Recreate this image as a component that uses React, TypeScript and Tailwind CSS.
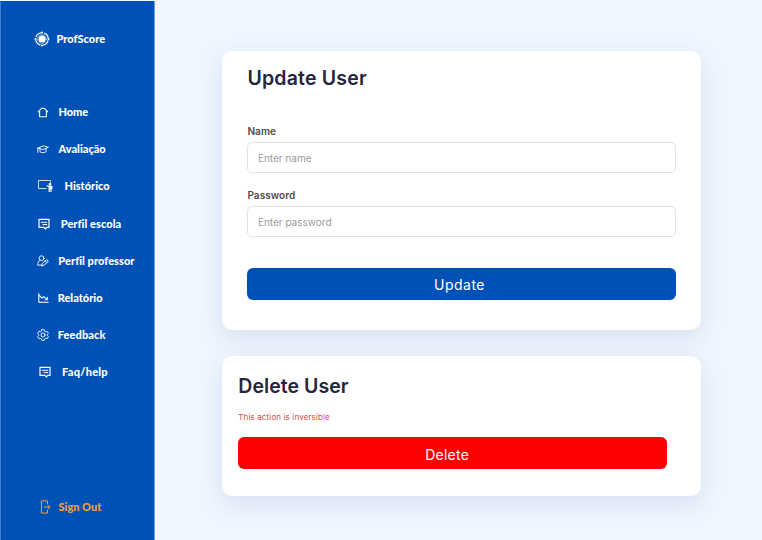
import React from "react";

const stroke = {
  fill: "none",
  stroke: "currentColor",
  strokeLinecap: "round",
  strokeLinejoin: "round",
} as const;

function LogoIcon() {
  return (
    <svg width="16" height="16" viewBox="0 0 16 16" className="block">
      <circle cx="8" cy="8" r="6.3" {...stroke} strokeWidth="1.2" strokeLinecap="butt" strokeDasharray="6.9 3" strokeDashoffset="-1.5" />
      <circle cx="8" cy="8" r="4.3" {...stroke} strokeWidth="0.7" opacity="0.75" />
      <circle cx="8" cy="8" r="3.5" fill="currentColor" />
      <circle cx="8" cy="1.5" r="1.1" fill="currentColor" />
      <circle cx="8" cy="14.5" r="1.1" fill="currentColor" />
      <circle cx="1.5" cy="8" r="1.1" fill="currentColor" />
      <circle cx="14.5" cy="8" r="1.1" fill="currentColor" />
    </svg>
  );
}

function HomeIcon() {
  return (
    <svg width="12" height="11" viewBox="0 0 12 11" className="block">
      <path d="M1.2 4.8 4.6 1.3h2.8l3.4 3.5M2.6 4v5.8h6.8V4" {...stroke} strokeWidth="1.1" />
    </svg>
  );
}

function CapIcon() {
  return (
    <svg width="12" height="9" viewBox="0 0 12 9" className="block">
      <path d="M.8 3 6.6.9l4.8 1.4-5.5 2.3L.8 3v4.4M3 3.8v3c1.7 1.3 4.2 1.1 6 0V3.5" {...stroke} strokeWidth="0.9" />
    </svg>
  );
}

function BoardIcon() {
  return (
    <svg width="15" height="12" viewBox="0 0 15 12" className="block">
      <path d="M8.2 8.5H.5v-8h12v1.4" {...stroke} strokeWidth="0.8" />
      <circle cx="12" cy="4" r="1.3" fill="currentColor" />
      <path d="m8.6 5.3 1.6.2h3.2l1.1.9v2.9h-.9V12h-1.2V9.5h-.6V12h-1.2V6.9l-2-.6Z" fill="currentColor" />
    </svg>
  );
}

function MessageIcon() {
  return (
    <svg width="12" height="12" viewBox="0 0 12 12" className="block">
      <path d="M1 1.4h10v8H8.8L7.4 11 6 9.4H1Z" {...stroke} strokeWidth="1.2" />
      <path d="M3.2 4.3h5.6M5 6.6h3.8" {...stroke} strokeWidth="1" />
    </svg>
  );
}

function UserEditIcon() {
  return (
    <svg width="12" height="12" viewBox="0 0 12 12" className="block">
      <circle cx="4.6" cy="3.2" r="2.4" {...stroke} strokeWidth="0.9" />
      <path d="M3 5.2C1.3 6 .7 7.6.7 10.1h3.9M4.8 10.8l.5-2.3 4.3-3.9 1.8 1.7-4.4 3.9-2.2.6ZM8.2 5.8 10 7.6" {...stroke} strokeWidth="0.9" />
    </svg>
  );
}

function ChartIcon() {
  return (
    <svg width="11" height="10" viewBox="0 0 11 10" className="block">
      <path d="M.8.6v8.6h9.4M1.3 2.3l2.8 2.8 1.7-1.5 3.4 3M9.3 4.4v2.3H7.1" {...stroke} strokeWidth="1.1" />
    </svg>
  );
}

function GearIcon() {
  return (
    <svg width="12" height="12" viewBox="0 0 12 12" className="block">
      <path d="M4.8.7h2.4l.4 1.5 1.2.7 1.4-.5 1.2 2.1L10.2 5.6v.9l1.2 1.1-1.2 2-1.4-.4-1.2.7-.4 1.4H4.8l-.4-1.4-1.2-.7-1.4.4-1.2-2 1.2-1.1v-.9L.6 4.5l1.2-2.1 1.4.5 1.2-.7Z" {...stroke} strokeWidth="0.9" />
      <circle cx="6" cy="6" r="2" {...stroke} strokeWidth="0.9" />
    </svg>
  );
}

function SignOutIcon() {
  return (
    <svg width="11" height="14" viewBox="0 0 11 14" className="block">
      <path d="M7.5 3.6V.9H1.4v12.2h6.1v-2.7M4 7h5.8M7.8 4.9 9.9 7 7.8 9.1" {...stroke} strokeWidth="1" />
    </svg>
  );
}

const items = [
  { label: "Home", icon: <HomeIcon />, pad: "pl-[37px]", gap: "w-[21.5px]", track: "tracking-[-0.1px]" },
  { label: "Avaliação", icon: <CapIcon />, pad: "pl-[37px]", gap: "w-[21.5px]", track: "tracking-[0px]" },
  { label: "Histórico", icon: <BoardIcon />, pad: "pl-[38px]", gap: "w-[26.5px]", track: "tracking-[-0.02px]" },
  { label: "Perfil escola", icon: <MessageIcon />, pad: "pl-[38px]", gap: "w-[22.7px]", track: "tracking-[0.06px]" },
  { label: "Perfil professor", icon: <UserEditIcon />, pad: "pl-[37px]", gap: "w-[21.3px]", track: "tracking-[0.05px]" },
  { label: "Relatório", icon: <ChartIcon />, pad: "pl-[38px]", gap: "w-[19.7px]", track: "tracking-[0px]" },
  { label: "Feedback", icon: <GearIcon />, pad: "pl-[37px]", gap: "w-[20.7px]", track: "tracking-[0.1px]" },
  { label: "Faq/help", icon: <MessageIcon />, pad: "pl-[39px]", gap: "w-[23px]", track: "tracking-[0.26px]" },
];

function Sidebar() {
  return (
    <aside className="flex w-[155px] shrink-0 flex-col border-x border-l-[#3d7fca] border-r-[#6f9fd8] bg-[#0051b5] font-['Lato','Open_Sans',sans-serif] text-[11px] font-black leading-4 text-white">
      <div className="-ml-px flex h-[76px] items-center pl-[34px]">
        <LogoIcon />
        <span className="pl-[6.5px]">ProfScore</span>
      </div>
      <nav className="-ml-px mt-[16.5px] flex flex-col">
        {items.map((item) => (
          <a key={item.label} className={`flex h-[37.2px] items-center whitespace-nowrap ${item.pad}`}>
            <span className={`shrink-0 ${item.gap}`}>{item.icon}</span>
            <span className={item.track}>{item.label}</span>
          </a>
        ))}
      </nav>
      <a className="-ml-px mb-[25px] mt-auto flex items-center pl-[40px] text-[#f0a040]">
        <span className="w-[18.5px]"><SignOutIcon /></span>
        <span>Sign Out</span>
      </a>
    </aside>
  );
}

function Field({ label, placeholder }: { label: string; placeholder: string }) {
  return (
    <label className="block">
      <span className="block text-[10px] font-semibold leading-4 tracking-[0.08px] text-[#4b4b50]">{label}</span>
      <input
        className="mt-[3px] block h-[31px] w-full rounded-[5px] border border-[#e3e3e5] bg-white px-[9.5px] pt-px text-[10px] outline-none placeholder:text-[#9b9b9b]"
        placeholder={placeholder}
      />
    </label>
  );
}

export default function App() {
  return (
    <div className="flex h-[540px] w-[762px] overflow-hidden border-t border-[#f4faff] bg-[#eff6ff] font-['Inter','Open_Sans',sans-serif]">
      <Sidebar />
      <main className="flex flex-col gap-[26px] pl-[67px] pt-[49.5px]">
        <section className="h-[279px] w-[479px] rounded-[10px] bg-white px-[25.4px] pt-[13.5px] shadow-[0_8px_24px_rgba(40,50,130,0.11)]">
          <h1 className="text-[19.5px] font-semibold leading-7 tracking-[0.2px] text-[#25253f]">Update User</h1>
          <form className="mt-[31px]">
            <Field label="Name" placeholder="Enter name" />
            <div className="mt-[14.4px]">
              <Field label="Password" placeholder="Enter password" />
            </div>
            <button type="button" className="mt-[30.6px] block h-8 w-full rounded-md bg-[#0051b5] pr-[4px] pt-px text-[14px] tracking-[0.5px] text-white">
              Update
            </button>
          </form>
        </section>
        <section className="h-[140px] w-[479px] rounded-[10px] bg-white pl-[16.3px] pr-[34px] pt-[16.5px] shadow-[0_8px_24px_rgba(40,50,130,0.11)]">
          <h2 className="text-[19.5px] font-semibold leading-7 tracking-[0.05px] text-[#25253f]">Delete User</h2>
          <p className="mt-[11px] text-[8px] leading-3 tracking-[0.13px] text-[#e04848]">This action is inversible</p>
          <button type="button" className="mt-[14px] block h-8 w-full rounded-md bg-[#ff0000] pr-[11px] pt-[2px] text-[14px] tracking-[0.25px] text-white">
            Delete
          </button>
        </section>
      </main>
    </div>
  );
}
